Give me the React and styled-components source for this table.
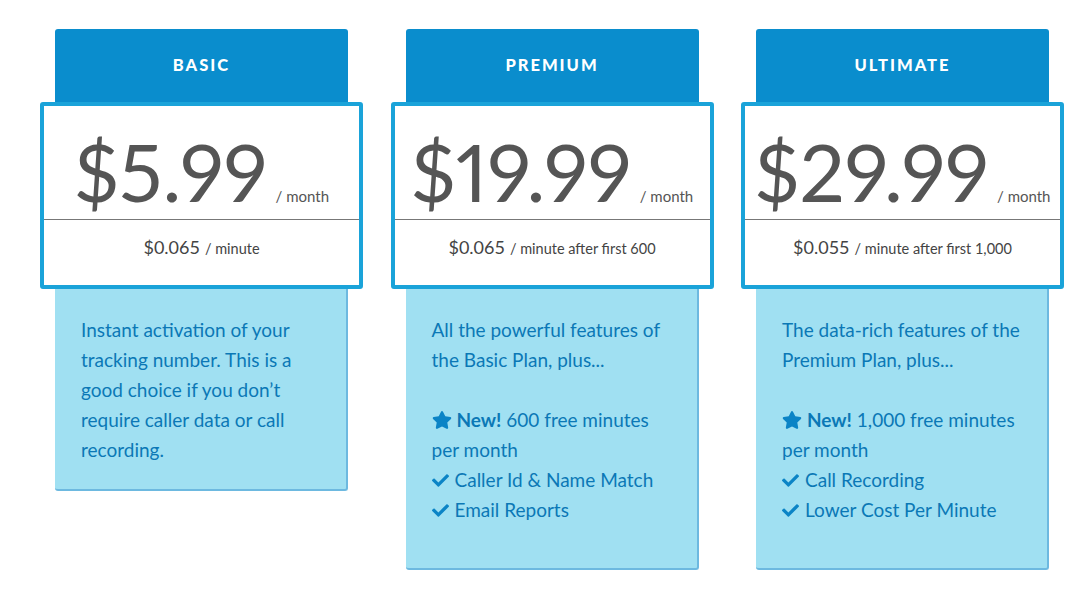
import styled, { createGlobalStyle } from "styled-components";
import { FaStar, FaCheck } from "react-icons/fa";

const GlobalStyle = createGlobalStyle`
  body {
    margin: 0;
    background: #fff;
    font-family: "Lato", "Open Sans", sans-serif;
  }
`;

const plans = [
  {
    name: "BASIC",
    price: "$5.99",
    rate: "$0.065",
    rateNote: "/ minute",
    description: "Instant activation of your tracking number. This is a good choice if you don’t require caller data or call recording.",
  },
  {
    name: "PREMIUM",
    price: "$19.99",
    rate: "$0.065",
    rateNote: "/ minute after first 600",
    description: "All the powerful features of the Basic Plan, plus...",
    minutes: "600",
    features: ["Caller Id & Name Match", "Email Reports"],
  },
  {
    name: "ULTIMATE",
    price: "$29.99",
    rate: "$0.055",
    rateNote: "/ minute after first 1,000",
    description: "The data-rich features of the Premium Plan, plus...",
    minutes: "1,000",
    features: ["Call Recording", "Lower Cost Per Minute"],
  },
];

export default function App() {
  return (
    <>
      <GlobalStyle />
      <Page>
        {plans.map((plan) => (
          <Column key={plan.name}>
            <Header>{plan.name}</Header>
            <PriceBox>
              <PriceRow>
                <Price>{plan.price}</Price>
                <Period>/ month</Period>
              </PriceRow>
              <RateRow>
                <Rate>{plan.rate}</Rate>
                <RateNote>{plan.rateNote}</RateNote>
              </RateRow>
            </PriceBox>
            <Body $extended={!!plan.features}>
              <Description>{plan.description}</Description>
              {plan.features && (
                <Features>
                  <Feature>
                    <StarIcon />
                    <strong>New!</strong> {plan.minutes} free minutes per month
                  </Feature>
                  {plan.features.map((f) => (
                    <Feature key={f}>
                      <CheckIcon />
                      {f}
                    </Feature>
                  ))}
                </Features>
              )}
            </Body>
          </Column>
        ))}
      </Page>
    </>
  );
}

const Page = styled.div`
  display: flex;
  align-items: flex-start;
  gap: 57.5px;
  padding: 29px 0 0 55px;
`;

const Column = styled.div`
  width: 293px;
  display: flex;
  flex-direction: column;
`;

const Header = styled.div`
  height: 73px;
  background: #0a8dcd;
  border-radius: 3px 3px 0 0;
  color: #fff;
  font-family: "Lato", sans-serif;
  font-weight: 900;
  font-size: 16.5px;
  letter-spacing: 2px;
  display: flex;
  align-items: center;
  justify-content: center;
  padding-bottom: 2px;
  box-sizing: border-box;
`;

const PriceBox = styled.div`
  margin: 0 -15px;
  border: 4px solid #1aa3d9;
  border-radius: 3px;
  background: #fff;
  height: 187px;
  box-sizing: border-box;
  display: flex;
  flex-direction: column;
`;

const PriceRow = styled.div`
  height: 114px;
  border-bottom: 1px solid #777;
  display: flex;
  align-items: baseline;
  justify-content: center;
  gap: 8px;
  padding-top: 25px;
  box-sizing: border-box;
  color: #555;
  white-space: nowrap;
`;

const Price = styled.span`
  font-family: "Lato", sans-serif;
  font-weight: 400;
  font-size: 80px;
  line-height: 1;
  font-variant-numeric: proportional-nums;
`;

const Period = styled.span`
  font-size: 15px;
  color: #555;
  flex-shrink: 0;
`;

const RateRow = styled.div`
  flex: 1;
  display: flex;
  align-items: baseline;
  justify-content: center;
  gap: 5px;
  padding-top: 16px;
  color: #444;
  white-space: nowrap;
`;

const Rate = styled.span`
  font-size: 18px;
`;

const RateNote = styled.span`
  font-size: 14.5px;
`;

const Body = styled.div`
  background: #a0e0f2;
  border-right: 2px solid #6db9e0;
  border-bottom: 2px solid #6db9e0;
  border-radius: 0 0 3px 3px;
  padding: 26px 26px ${(p) => (p.$extended ? "43px" : "24px")} 26px;
  color: #0b78b6;
  font-size: 19px;
  line-height: 30px;
`;

const Description = styled.p`
  margin: 0;
`;

const Features = styled.div`
  margin-top: 30px;
`;

const Feature = styled.div`
  strong {
    font-weight: 700;
  }
`;

const StarIcon = styled(FaStar)`
  font-size: 20px;
  vertical-align: -3px;
  margin-right: 5px;
  color: #0b84c6;
`;

const CheckIcon = styled(FaCheck)`
  font-size: 17px;
  vertical-align: -2px;
  margin-right: 6px;
  color: #0b84c6;
`;
